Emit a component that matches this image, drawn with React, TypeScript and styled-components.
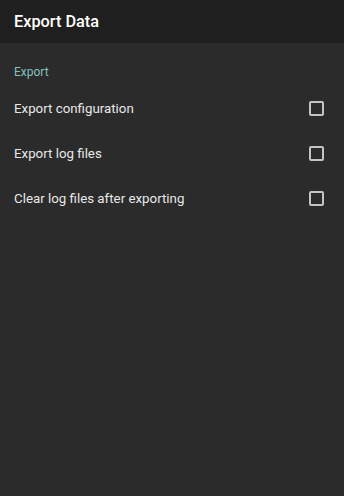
import styled, { createGlobalStyle } from "styled-components";

const GlobalStyle = createGlobalStyle`
    body {
        margin: 0;
        background: #ffffff;
        font-family: Roboto, "Liberation Sans", sans-serif;
    }
`;

const Screen = styled.div`
    width: 344px;
    height: 496px;
    background: #2b2b2b;
    display: flex;
    flex-direction: column;
`;

const Header = styled.header`
    height: 43px;
    background: #1f1f1f;
    display: flex;
    align-items: center;
    padding: 0 14px;

    h1 {
        margin: 0;
        color: #ffffff;
        font-size: 16.3px;
        font-weight: 500;
    }
`;

const SectionTitle = styled.p`
    margin: 0;
    padding: 21px 14px 0;
    height: 16px;
    line-height: 16px;
    font-size: 12px;
    color: #80c4bb;
`;

const List = styled.ul`
    list-style: none;
    margin: 6px 0 0;
    padding: 0;
`;

const Row = styled.li`
    height: 45px;
    display: flex;
    align-items: center;
    justify-content: space-between;
    padding: 0 20px 0 14px;
    color: #e8e8e8;
    font-size: 13.3px;
`;

const Box = styled.span`
    width: 11px;
    height: 11px;
    border: 2px solid #c4c4c4;
    border-radius: 2px;
`;

const items = ["Export configuration", "Export log files", "Clear log files after exporting"];

const App: React.FC = () => {
    return (
        <>
            <GlobalStyle />
            <Screen>
                <Header>
                    <h1>Export Data</h1>
                </Header>
                <SectionTitle>Export</SectionTitle>
                <List>
                    {items.map(label => (
                        <Row key={label}>
                            {label}
                            <Box />
                        </Row>
                    ))}
                </List>
            </Screen>
        </>
    );
};

export default App;
